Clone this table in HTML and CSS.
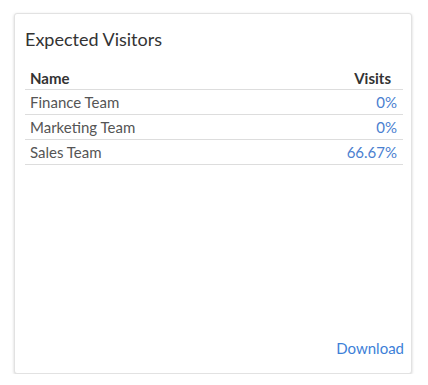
FILE: index.html
```html
<!DOCTYPE html>
<html>
<head>
<meta charset="utf-8">
<link rel="stylesheet" href="styles.css">
</head>
<body>
<div class="card">
  <h2 class="title">Expected Visitors</h2>
  <table class="grid">
    <thead>
      <tr><th class="name">Name</th><th class="visits">Visits</th></tr>
    </thead>
    <tbody>
      <tr><td>Finance Team</td><td class="num">0%</td></tr>
      <tr><td>Marketing Team</td><td class="num">0%</td></tr>
      <tr><td>Sales Team</td><td class="num">66.67%</td></tr>
    </tbody>
  </table>
  <div class="spacer"></div>
  <div class="footer"><a class="download">Download</a></div>
</div>
</body>
</html>
```
FILE: styles.css
```css
html, body { margin: 0; padding: 0; background: #fff; }
body { padding: 13px 16px 0 14px; font-family: Lato, "Open Sans", sans-serif; }
.card {
  box-sizing: border-box;
  height: 361px;
  border: 1px solid #e2e2e2;
  border-radius: 3px;
  box-shadow: 0 1px 3px rgba(0,0,0,0.18);
  padding: 0 8px 0 10px;
  display: flex;
  flex-direction: column;
  background: #fff;
}
.title {
  margin: 14px 0 0 0;
  font-size: 18px;
  font-weight: 400;
  color: #333;
  line-height: 22px;
  padding-left: 0;
}
.grid {
  width: 100%;
  border-collapse: collapse;
  margin-top: 16px;
  font-size: 15px;
}
.grid th {
  font-weight: 700;
  color: #333;
  text-align: left;
  padding: 0 5px;
  height: 23px;
  border-bottom: 1px solid #ddd;
}
.grid th.visits { text-align: right; padding-right: 12px; }
.grid td {
  color: #555;
  padding: 0 5px;
  height: 24px;
  border-bottom: 1px solid #ddd;
}
.grid td.num { text-align: right; color: #4a80d0; padding-right: 6px; }
.spacer { flex: 1; }
.footer { display: flex; justify-content: flex-end; padding-bottom: 16px; }
.download { color: #3d7fd8; font-size: 15px; line-height: 18px; margin-right: -1px; }
```
